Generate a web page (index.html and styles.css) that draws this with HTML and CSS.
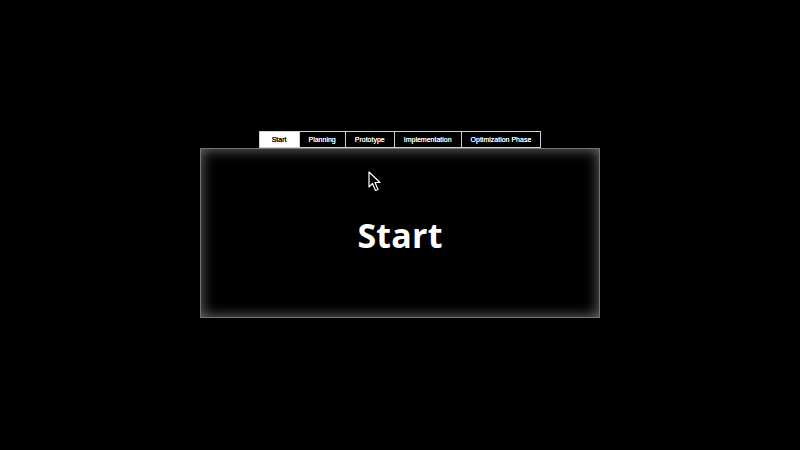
FILE: index.html
```html
<!DOCTYPE html>
<html>
<head>
<meta charset="utf-8">
<link rel="stylesheet" href="styles.css">
</head>
<body>
<div class="page">
  <nav class="tabs">
    <div class="tab active">Start</div>
    <div class="tab">Planning</div>
    <div class="tab">Prototype</div>
    <div class="tab">Implementation</div>
    <div class="tab">Optimization Phase</div>
  </nav>
  <section class="panel">
    <h1 class="title">Start</h1>
    <svg class="cursor" width="14" height="22" viewBox="0 0 14 22">
      <path d="M1 1 L1 16 L4.5 12.5 L7.5 19.5 L10 18.5 L7 11.5 L12 11.5 Z" fill="#000" stroke="#fff" stroke-width="1.2" stroke-linejoin="round"/>
    </svg>
  </section>
</div>
</body>
</html>
```
FILE: styles.css
```css
html, body {
  margin: 0;
  padding: 0;
  background: #000;
  width: 800px;
  height: 450px;
  overflow: hidden;
}
.page {
  display: flex;
  flex-direction: column;
  align-items: center;
  padding-top: 131px;
}
.tabs {
  display: flex;
  height: 17px;
}
.tab {
  box-sizing: border-box;
  height: 17px;
  border: 1px solid #cfcfcf;
  margin-left: -1px;
  padding: 0 9px;
  font-family: "Liberation Sans", Arial, sans-serif;
  font-size: 7px;
  font-weight: normal;
  color: #fff;
  display: flex;
  align-items: center;
  justify-content: center;
  background: #000;
  -webkit-font-smoothing: antialiased;
  text-shadow: 0 0 0.3px #fff;
}
.tab:first-child { margin-left: 0; }
.tab.active {
  background: #fff;
  color: #000;
  padding: 0 12px;
  text-shadow: 0 0 0.3px #000;
}
.panel {
  position: relative;
  box-sizing: border-box;
  width: 400px;
  height: 170px;
  border: 1px solid rgba(255,255,255,0.45);
  box-shadow: inset 0 0 14px rgba(255,255,255,0.45);
  display: flex;
  align-items: center;
  justify-content: center;
  padding-top: 4px;
}
.title {
  margin: 0;
  font-family: "Open Sans", sans-serif;
  font-weight: 700;
  font-size: 34px;
  color: #fff;
  letter-spacing: 0.2px;
  -webkit-font-smoothing: antialiased;
}
.cursor {
  position: absolute;
  left: 167px;
  top: 22px;
}
```
